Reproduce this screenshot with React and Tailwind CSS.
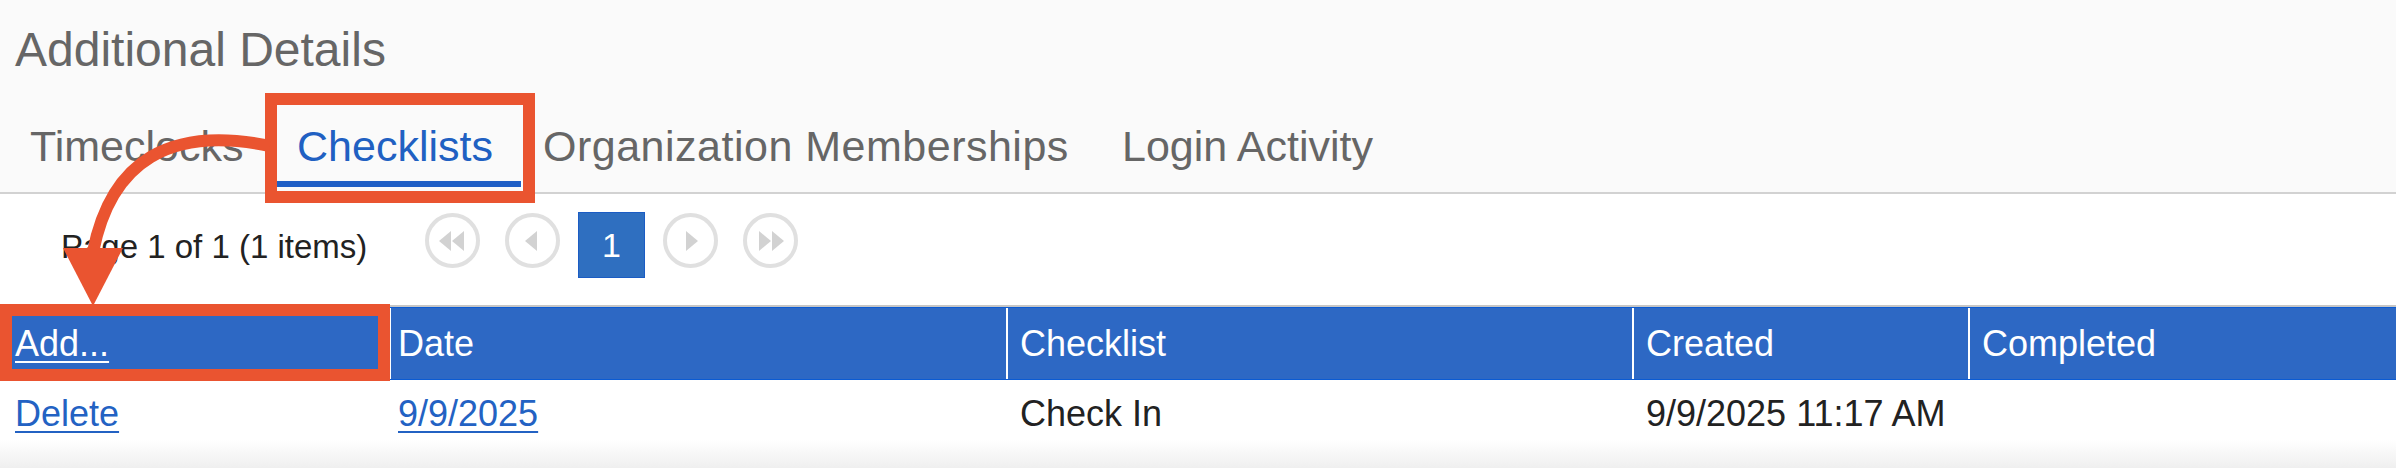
import React from 'react';

// Pager arrow glyphs (light grey triangles inside ringed buttons)
function Tri({ dir = 'left', double = false }) {
  const one = dir === 'left' ? '12,0 0,10 12,20' : '0,0 12,10 0,20';
  const two = dir === 'left' ? '25,0 13,10 25,20' : '13,0 25,10 13,20';
  return (
    <svg width={double ? 25 : 12} height="20" viewBox={`0 0 ${double ? 25 : 12} 20`}>
      <polygon points={one} fill="#d2d2d2" />
      {double && <polygon points={two} fill="#d2d2d2" />}
    </svg>
  );
}

function PagerCircle({ children, className = '' }) {
  return (
    <div className={`w-[55px] h-[55px] mt-[1px] rounded-full border-[4px] border-[#e0e0e0] flex items-center justify-center ${className}`}>
      {children}
    </div>
  );
}

export default function App() {
  return (
    <div className="relative w-[2396px] h-[468px] overflow-hidden bg-white font-['Liberation_Sans',Arial,sans-serif]">
      {/* Section title + tabs */}
      <div className="bg-[#fafafa]">
        <div className="h-[104px] pl-[15px] pt-[22px]">
          <h2 className="text-[48px] leading-[56px] text-[#666666] font-normal">Additional Details</h2>
        </div>

        <div className="flex pl-[6px] h-[88px]">
          <div className="w-[269px] pl-[24px] pt-[17px]">
            <span className="text-[43px] leading-[50px] text-[#666666]">Timeclocks</span>
          </div>
          <div className="relative w-[246px] pl-[22px] pt-[17px]">
            <span className="text-[43px] leading-[50px] text-[#2060c2]">Checklists</span>
            <div className="absolute left-[2px] right-0 top-[77px] h-[6px] bg-[#1f5fc6]" />
          </div>
          <div className="w-[577px] pl-[22px] pt-[17px]">
            <span className="text-[43px] leading-[50px] text-[#666666] tracking-[0.5px]">Organization Memberships</span>
          </div>
          <div className="pl-[24px] pt-[17px]">
            <span className="text-[43px] leading-[50px] text-[#666666]">Login Activity</span>
          </div>
        </div>
      </div>
      <div className="h-[2px] bg-[#d2d2d2]" />

      {/* Pager */}
      <div className="flex items-start h-[111px] pt-[18px] pl-[61px]">
        <div className="w-[364px] pt-[10px] text-[33px] leading-[50px] text-[#222222]">Page 1 of 1 (1 items)</div>
        <div className="flex items-start">
          <PagerCircle><span className="-ml-[2px] flex"><Tri dir="left" double /></span></PagerCircle>
          <PagerCircle className="ml-[25px]"><span className="-ml-[3px] flex"><Tri dir="left" /></span></PagerCircle>
          <div className="ml-[18px] w-[67px] h-[66px] bg-[#2f6fc0] border border-[#1b5cc4] flex items-center justify-center text-white text-[34px]">1</div>
          <PagerCircle className="ml-[18px]"><span className="ml-[3px] flex"><Tri dir="right" /></span></PagerCircle>
          <PagerCircle className="ml-[25px]"><span className="ml-[2px] flex"><Tri dir="right" double /></span></PagerCircle>
        </div>
      </div>

      {/* Grid */}
      <div className="h-[2px] bg-[#c6c6c6]" />
      <div className="flex h-[73px] bg-[#2d68c4] border-y border-[#0b5bd3] text-white text-[36px] leading-[44px]">
        <div className="w-[389px] pl-[15px] flex items-center">
          <a href="#" className="underline underline-offset-[5px] decoration-2">Add...</a>
        </div>
        <div className="w-[617px] pl-[7px] border-l-2 border-white flex items-center">Date</div>
        <div className="w-[626px] pl-[12px] border-l-2 border-white flex items-center">Checklist</div>
        <div className="w-[336px] pl-[12px] border-l-2 border-white flex items-center">Created</div>
        <div className="flex-1 pl-[12px] border-l-2 border-white flex items-center">Completed</div>
      </div>

      <div className="flex h-[60px] pt-[12px] text-[36px] leading-[44px] text-[#222222]">
        <div className="w-[389px] pl-[15px]">
          <a href="#" className="text-[#2362c3] underline underline-offset-[5px] decoration-2">Delete</a>
        </div>
        <div className="w-[617px] pl-[9px]">
          <a href="#" className="text-[#2362c3] underline underline-offset-[5px] decoration-2">9/9/2025</a>
        </div>
        <div className="w-[626px] pl-[14px]">Check In</div>
        <div className="w-[336px] pl-[14px]">9/9/2025 11:17 AM</div>
        <div className="flex-1" />
      </div>
      <div className="h-[28px] bg-gradient-to-b from-white to-[#efefef]" />

      {/* Annotation overlay: highlight boxes + arrow */}
      <div className="absolute left-[265px] top-[93px] w-[270px] h-[110px] border-[12px] border-[#ea5430]" />
      <div className="absolute left-0 top-[304px] w-[390px] h-[77px] border-[12px] border-[#ea5430]" />
      <svg className="absolute left-0 top-0 pointer-events-none" width="2396" height="468">
        <path d="M 270 146 Q 120 115 93 252" stroke="#ea5430" strokeWidth="12" fill="none" />
        <polygon points="63,248 123,248 93,306" fill="#ea5430" />
      </svg>
    </div>
  );
}
